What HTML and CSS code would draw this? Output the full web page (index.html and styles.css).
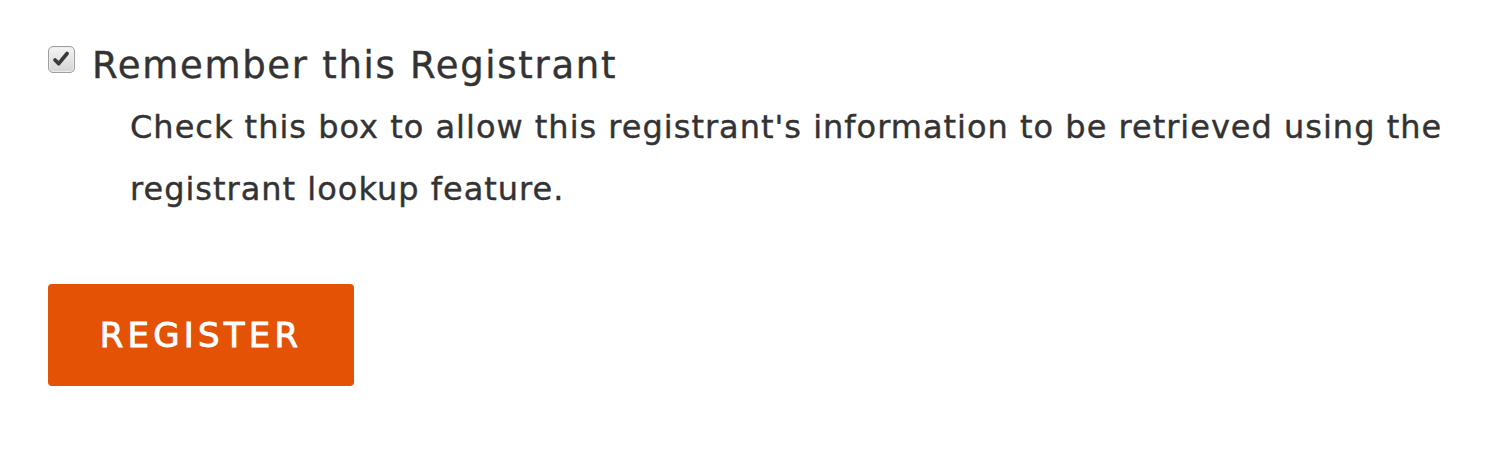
FILE: index.html
```html
<!DOCTYPE html>
<html>
<head>
<meta charset="utf-8">
<link rel="stylesheet" href="styles.css">
</head>
<body>
<div class="page">
  <label class="check-row">
    <span class="checkbox">
      <svg viewBox="0 0 27 27" width="27" height="27">
        <path d="M6.5 14 L10.5 18 L19.5 7" fill="none" stroke="#3a3a3a" stroke-width="4" stroke-linecap="round" stroke-linejoin="round"/>
      </svg>
    </span>
    <span class="check-title">Remember this Registrant</span>
  </label>
  <p class="help">Check this box to allow this registrant's information to be retrieved using the registrant lookup feature.</p>
  <button class="register">REGISTER</button>
</div>
</body>
</html>
```
FILE: styles.css
```css
html, body { margin: 0; padding: 0; background: #fff; }
body { font-family: "DejaVu Sans", sans-serif; color: #333; }
.page { padding: 46px 48px 0 48px; }
.check-row { display: flex; align-items: flex-start; gap: 17px; }
.checkbox {
  width: 27px; height: 27px; box-sizing: border-box; flex: none;
  border: 1px solid #9e9e9e; border-radius: 5px;
  background: linear-gradient(#f4f4f4, #d4d4d4);
  box-shadow: inset 0 0 0 1px #ececec;
  display: flex; align-items: center; justify-content: center;
}
.checkbox svg { width: 27px; height: 27px; }
.check-title { font-size: 37px; line-height: 38px; letter-spacing: 1.7px; color: #333; margin-top: 1px; -webkit-text-stroke: 0.4px #333; }
.help { margin: 11px 0 0 82px; font-size: 32px; line-height: 62px; letter-spacing: 1px; color: #333; max-width: 1340px; -webkit-text-stroke: 0.4px #333; }
.register {
  display: block;
  margin-top: 64px;
  width: 306px; height: 102px; padding: 0;
  background: #e35205; color: #fff; border: none; border-radius: 4px;
  font-family: "DejaVu Sans", sans-serif; font-size: 34px; letter-spacing: 4.2px;
  -webkit-text-stroke: 0.9px #fff;
}
```
